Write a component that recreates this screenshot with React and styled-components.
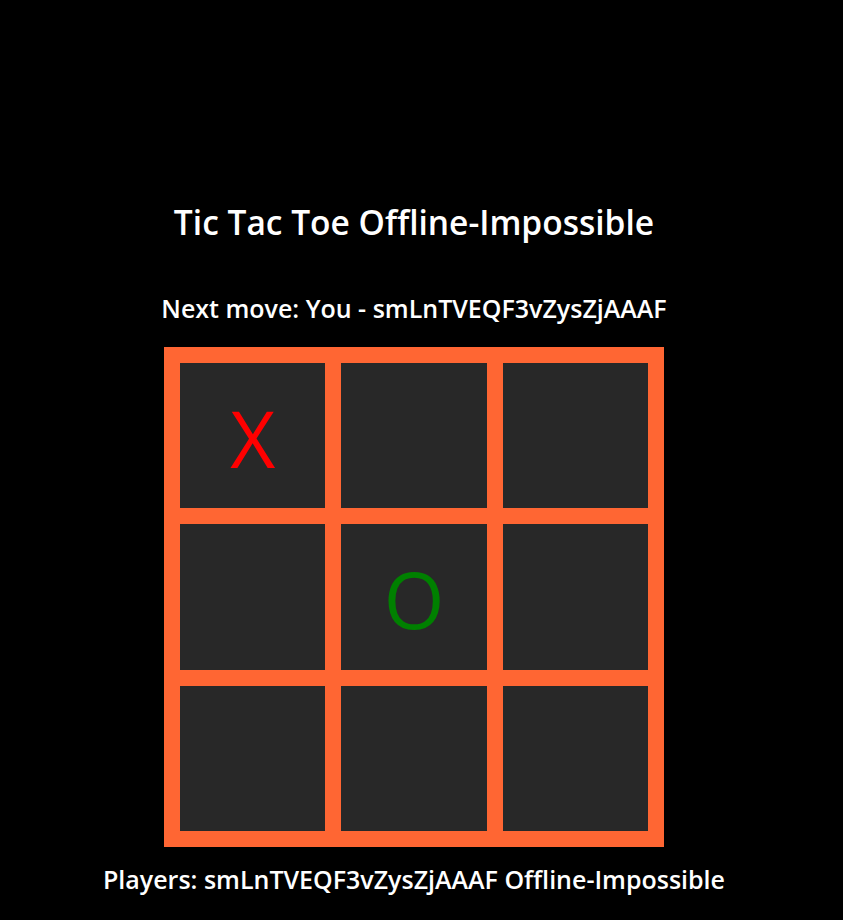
import React from "react";
import styled, { createGlobalStyle } from "styled-components";

const Global = createGlobalStyle`
  html, body { margin: 0; padding: 0; background: #000; }
  body { font-family: "Open Sans", "Noto Sans", sans-serif; color: #fff; }
`;

const Page = styled.div`
  width: 828px;
  min-height: 920px;
  display: flex;
  flex-direction: column;
  align-items: center;
  padding-top: 202px;
  box-sizing: border-box;
`;

const Title = styled.h1`
  margin: 0;
  font-size: 33.5px;
  line-height: 40px;
  font-weight: 600;
  white-space: nowrap;
`;

const Status = styled.h2`
  margin: 51px 0 0;
  font-size: 25px;
  line-height: 30px;
  font-weight: 600;
  white-space: nowrap;
`;

const Board = styled.div`
  margin-top: 24px;
  width: 500px;
  height: 500px;
  box-sizing: border-box;
  padding: 16px;
  background: #ff6633;
  display: grid;
  grid-template-columns: repeat(3, 1fr);
  grid-template-rows: repeat(3, 1fr);
  gap: 16px;
`;

const Cell = styled.div`
  background: #282828;
  display: flex;
  align-items: center;
  justify-content: center;
  font-size: 78px;
  font-weight: 400;
  color: ${(p) => (p.$mark === "X" ? "#ff0000" : "#008000")};
  line-height: 1;
  padding-top: 4px;
  box-sizing: border-box;
`;

const Players = styled.p`
  margin: 17px 0 0;
  font-size: 25px;
  line-height: 30px;
  font-weight: 600;
  white-space: nowrap;
`;

const cells = ["X", "", "", "", "O", "", "", "", ""];

export default function App() {
  return (
    <>
      <Global />
      <Page>
        <Title>Tic Tac Toe Offline-Impossible</Title>
        <Status>Next move: You - smLnTVEQF3vZysZjAAAF</Status>
        <Board>
          {cells.map((c, i) => (
            <Cell key={i} $mark={c}>
              {c}
            </Cell>
          ))}
        </Board>
        <Players>Players: smLnTVEQF3vZysZjAAAF Offline-Impossible</Players>
      </Page>
    </>
  );
}
